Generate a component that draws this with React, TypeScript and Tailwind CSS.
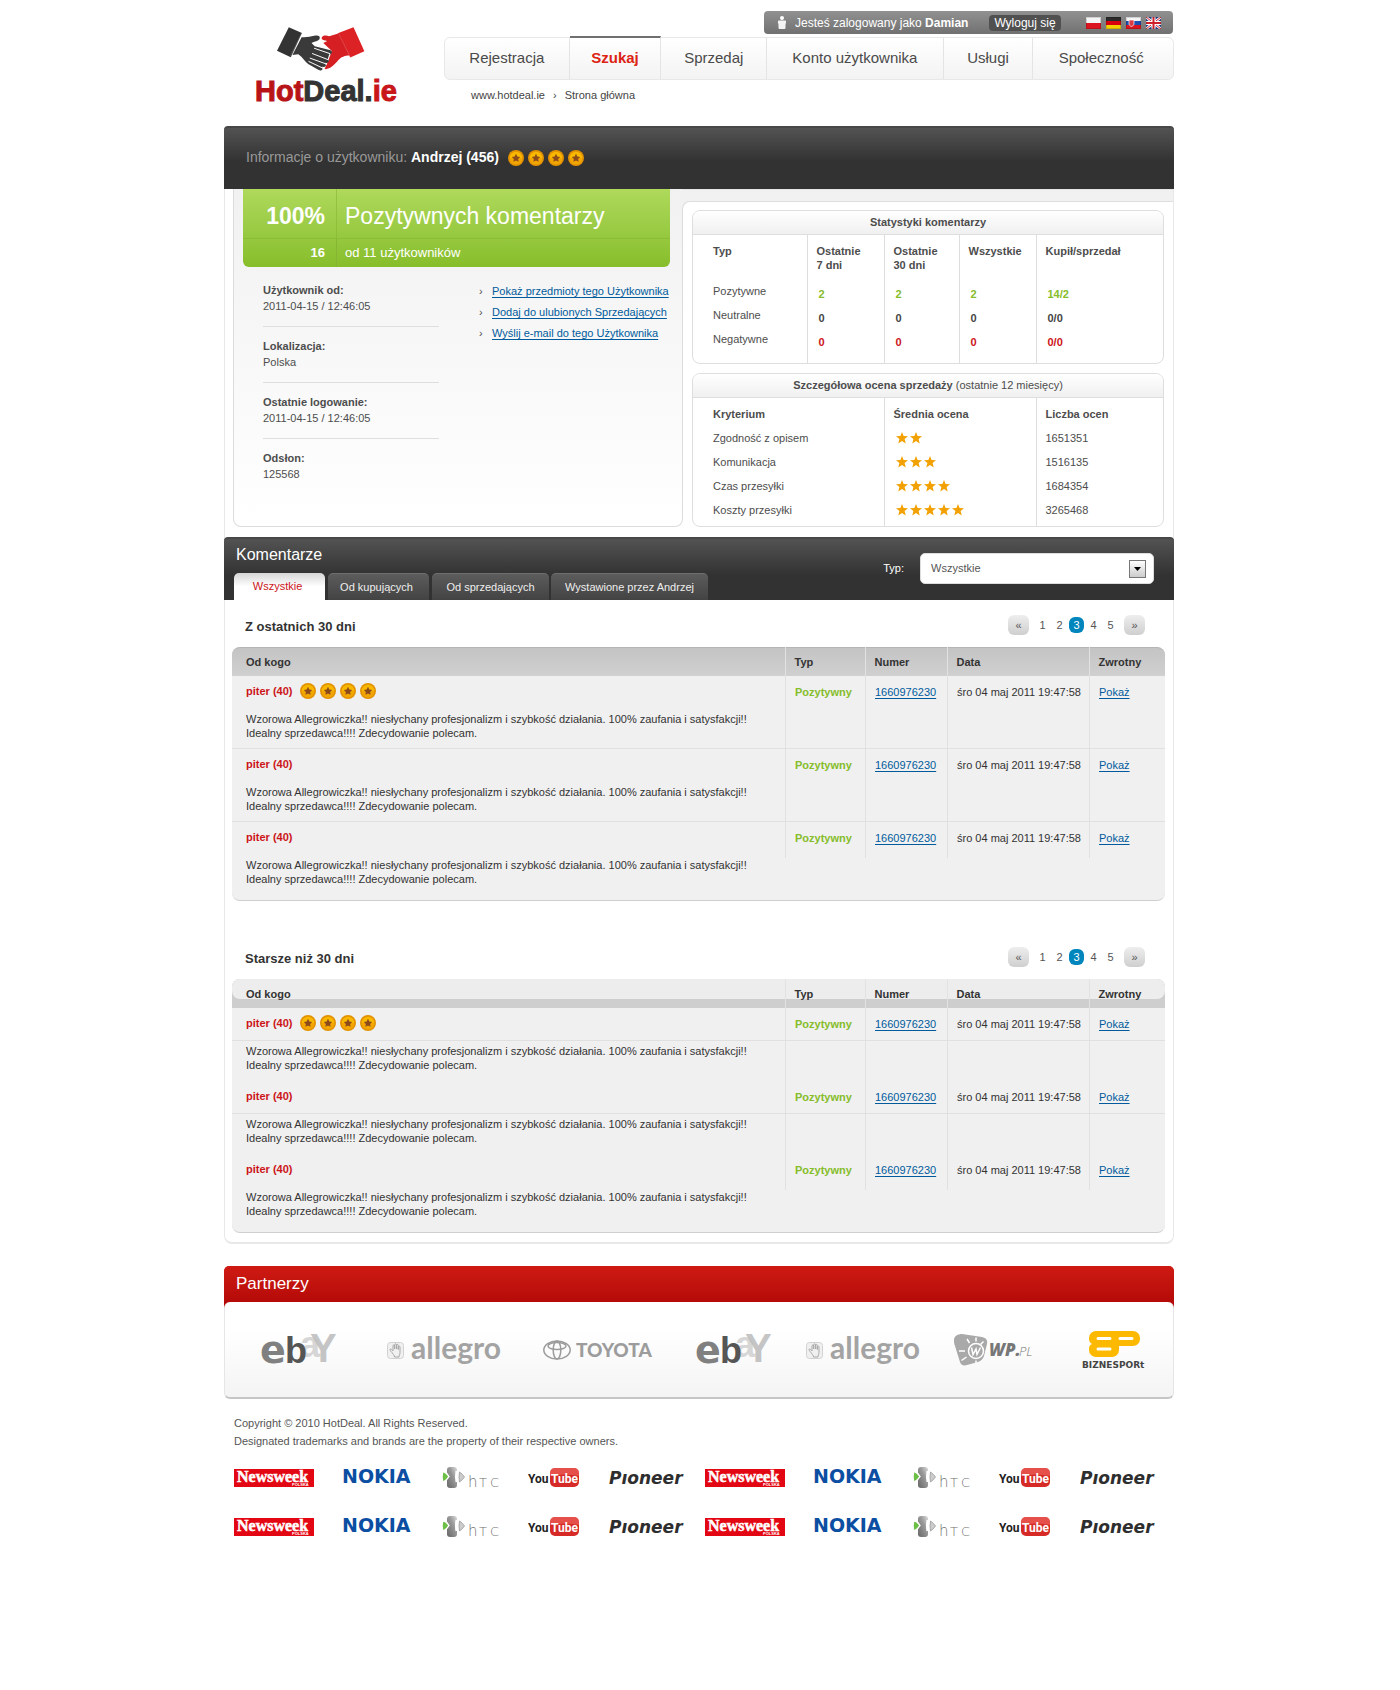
const NAV = ["Rejestracja", "Szukaj", "Sprzedaj", "Konto użytkownika", "Usługi", "Społeczność"];

function Handshake() {
  return (
    <svg viewBox="164 76 274 140" className="mr-[10px] h-[46px] w-[90px]" aria-hidden="true">
      <path d="M400 80 L433 153 L390 172 L352 98 Z" fill="#dd2226" />
      <path
        d="M303 112 C306 104 316 104 326 107 L356 98 L388 166 C374 166 362 170 352 182 C342 194 326 210 312 207 L322 184 L334 152 L308 128 L320 122 C312 120 302 119 303 112 Z"
        fill="#d61f23"
      />
      <path d="M203 80 L243 97 L209 171 L167 151 Z" fill="#333" />
      <path
        d="M242 110 C256 112 268 108 280 106 C292 103 299 106 297 114 C295 122 280 123 272 128 L282 138 L330 150 C338 154 334 164 326 162 L322 176 C330 182 322 192 314 188 L316 198 C312 202 306 200 304 200 C310 208 302 214 294 210 L262 192 C252 184 246 172 232 162 L214 164 Z"
        fill="#3a3a3a"
      />
      <path
        d="M281 144 L328 160 M275 160 L324 179 M268 174 L318 192 M264 184 L306 204"
        stroke="#fff"
        strokeWidth="3"
        strokeLinecap="round"
        fill="none"
      />
      <path d="M354 98 L390 170 M242 98 L208 168" stroke="#fff" strokeOpacity=".25" strokeWidth="2" />
    </svg>
  );
}

function Flags() {
  return (
    <div className="flex gap-[5px]">
      <a href="#pl" aria-label="Polski">
        <svg width="15" height="12" viewBox="0 0 15 12">
          <path d="M0 0h15v6H0z" fill="#f4f4f4" />
          <path d="M0 6h15v6H0z" fill="#dc1420" />
          <path d="M.5 .5h14v11H.5z" fill="none" stroke="#000" strokeOpacity=".15" />
        </svg>
      </a>
      <a href="#de" aria-label="Deutsch">
        <svg width="15" height="12" viewBox="0 0 15 12">
          <path d="M0 0h15v4H0z" fill="#2a2a2a" />
          <path d="M0 4h15v4H0z" fill="#d8000f" />
          <path d="M0 8h15v4H0z" fill="#f5cf00" />
          <path d="M.5 .5h14v11H.5z" fill="none" stroke="#000" strokeOpacity=".15" />
        </svg>
      </a>
      <a href="#sk" aria-label="Slovenčina">
        <svg width="15" height="12" viewBox="0 0 15 12">
          <path d="M0 0h15v4H0z" fill="#f4f4f4" />
          <path d="M0 4h15v4H0z" fill="#1c4fb0" />
          <path d="M0 8h15v4H0z" fill="#dc1420" />
          <path d="M3 3h5v4c0 1-1 2-2.500 2.500C4 9 3 8 3 7z" fill="#dc3a45" stroke="#fff" strokeWidth=".7" />
          <path d="M.5 .5h14v11H.5z" fill="none" stroke="#000" strokeOpacity=".15" />
        </svg>
      </a>
      <a href="#en" aria-label="English">
        <svg width="15" height="12" viewBox="0 0 15 12">
          <path d="M0 0h15v12H0z" fill="#27408f" />
          <path d="M0 0l15 12M15 0L0 12" stroke="#fff" strokeWidth="2.600" />
          <path d="M0 0l15 12M15 0L0 12" stroke="#d0202c" strokeWidth="1" />
          <path d="M7.500 0v12M0 6h15" stroke="#fff" strokeWidth="4" />
          <path d="M7.500 0v12M0 6h15" stroke="#d0202c" strokeWidth="2" />
          <path d="M.5 .5h14v11H.5z" fill="none" stroke="#000" strokeOpacity=".15" />
        </svg>
      </a>
    </div>
  );
}

const STAR = "M8 3.800l1.300 2.700 2.900.4-2.100 2 .5 2.900L8 10.400l-2.600 1.400.5-2.900-2.100-2 2.900-.4z";

function Coins() {
  return (
    <span className="flex gap-1" role="img" aria-label="4 gwiazdki">
      {[0, 1, 2, 3].map((i) => (
        <svg key={i} width="16" height="16" viewBox="0 0 16 16">
          <circle cx="8" cy="8" r="8" fill="#e39200" />
          <circle cx="8" cy="8" r="6.200" fill="#f9b800" />
          <path d="M1.800 8a6.200 6.200 0 0 0 12.400 0z" fill="#f2a500" />
          <path d={STAR} fill="#8a4a1c" />
        </svg>
      ))}
    </span>
  );
}

function Stars({ count }: { count: number }) {
  return (
    <span className="flex h-6 items-center gap-[2px]" role="img" aria-label={`${count} z 5`}>
      {Array.from({ length: count }, (_, i) => (
        <svg key={i} width="12" height="12" viewBox="0 0 12 12">
          <path d="M6 0l1.600 4.100 4.400.2-3.400 2.800 1.100 4.400L6 9.100l-3.700 2.400 1.100-4.400L0 4.300l4.400-.2z" fill="#f2a104" />
        </svg>
      ))}
    </span>
  );
}

function Header() {
  return (
    <header className="flex h-[126px] justify-between">
      <a href="#home" className="ml-[31px] mt-[26px] flex flex-col items-center self-start" aria-label="HotDeal.ie">
        <Handshake />
        <span className="mt-[3px] text-[29px] leading-8 font-bold text-[#333] [-webkit-text-stroke:1px]">
          <span className="text-[#b81418]">Hot</span>Deal.<span className="text-[#c8161b]">ie</span>
        </span>
      </a>
      <div className="flex w-[730px] flex-col pt-[11px]">
        <div className="mr-px flex h-[23px] w-[409px] items-center self-end rounded-[4px] bg-linear-to-b from-[#919191] to-[#717171] pr-[12px] pl-[13px] text-[12px] text-white">
          <svg width="10" height="13" viewBox="0 0 10 13" className="mr-2" aria-hidden="true">
            <circle cx="5" cy="2" r="2" fill="#fff" />
            <path d="M1.500 4.500h7C9.500 5 9 7 8.500 8.500V12q0 1-1 1h-5q-1 0-1-1V8.500C1 7 .5 5 1.500 4.500z" fill="#f4f4f4" />
          </svg>
          <span>
            Jesteś zalogowany jako <b>Damian</b>
          </span>
          <button type="button" className="ml-auto h-4 w-[72px] rounded-[4px] bg-[#505050] text-[12px] leading-4">
            Wyloguj się
          </button>
          <span className="ml-[25px]">
            <Flags />
          </span>
        </div>
        <nav className="mt-[3px] grid h-[43px] grid-cols-[125fr_92fr_106fr_177fr_90fr_140fr] rounded-[6px] border border-[#e8e8e8] bg-linear-to-b from-white to-[#f3f3f3] text-[15px] text-[#4a4a4a]">
          {NAV.map((item, i) => (
            <a
              key={item}
              href={`#${item}`}
              className={
                i === 1
                  ? "-mt-[2px] flex items-center justify-center border-t-2 border-r border-t-[#707070] border-r-[#e4e4e4] font-bold text-[#dc2314]"
                  : i === 5
                    ? "flex items-center justify-center pr-1"
                    : "flex items-center justify-center border-r border-[#e4e4e4]"
              }
            >
              {item}
            </a>
          ))}
        </nav>
        <p className="mt-2 ml-[27px] leading-[14px] text-[#444]">
          <a href="#hotdeal">www.hotdeal.ie</a>
          <span className="mx-2">›</span>
          <a href="#start">Strona główna</a>
        </p>
      </div>
    </header>
  );
}

const INFO = [
  ["Użytkownik od:", "2011-04-15 / 12:46:05"],
  ["Lokalizacja:", "Polska"],
  ["Ostatnie logowanie:", "2011-04-15 / 12:46:05"],
  ["Odsłon:", "125568"],
];

const USER_LINKS = [
  "Pokaż przedmioty tego Użytkownika",
  "Dodaj do ulubionych Sprzedających",
  "Wyślij e-mail do tego Użytkownika",
];

function UserCard() {
  return (
    <div className="rounded-b-[8px] border border-t-0 border-[#dcdcdc] bg-linear-to-b from-[#f1f1f1] to-white pl-[9px] text-[#4d4d4d]">
      <div className="mr-3 grid grid-cols-[94px_1fr] rounded-b-[6px] bg-linear-to-b from-[#aed95b] to-[#87be2a] text-white">
        <b className="flex h-[50px] items-center justify-end border-r border-b border-[#86b534]/60 pt-[6px] pr-[11px] text-[23px]">100%</b>
        <span className="flex h-[50px] items-center border-b border-[#86b534]/60 pt-[6px] pl-2 text-[23px]">
          Pozytywnych komentarzy
        </span>
        <b className="flex h-7 items-center justify-end border-r border-[#86b534] pr-[11px] text-[13px]">16</b>
        <span className="flex h-7 items-center pl-2 text-[13px]">od 11 użytkowników</span>
      </div>
      <div className="flex justify-between pt-1 pl-5">
        <dl className="w-[176px] leading-4">
          {INFO.map(([label, value]) => (
            <div key={label} className="border-b border-[#dedede] pt-[11px] pb-3 last:border-b-0">
              <dt className="font-bold">{label}</dt>
              <dd>{value}</dd>
            </div>
          ))}
        </dl>
        <ul className="w-[203px] pt-[10px] leading-[21px]">
          {USER_LINKS.map((link) => (
            <li key={link} className="flex">
              <span className="w-[13px]">›</span>
              <a href="#user" className="whitespace-nowrap text-[#005b9c] underline underline-offset-2">
                {link}
              </a>
            </li>
          ))}
        </ul>
      </div>
    </div>
  );
}

const CAPTION =
  "flex h-6 items-center justify-center rounded-t-[7px] border-b border-[#dedede] bg-linear-to-b from-white to-[#f0f0f0] text-[11px] text-[#4d4d4d]";
const STAT_ROWS = [
  { label: "Pozytywne", values: ["2", "2", "2", "14/2"], color: "text-[#86bd2a]" },
  { label: "Neutralne", values: ["0", "0", "0", "0/0"], color: "text-[#444]" },
  { label: "Negatywne", values: ["0", "0", "0", "0/0"], color: "text-[#cc1419]" },
];
const RATINGS: [string, number, string][] = [
  ["Zgodność z opisem", 2, "1651351"],
  ["Komunikacja", 3, "1516135"],
  ["Czas przesyłki", 4, "1684354"],
  ["Koszty przesyłki", 5, "3265468"],
];

function Stats() {
  return (
    <div className="relative -ml-px">
      <div className="h-3 border-t border-[#e6e6e6] bg-[#f1f1f1]" />
      <div className="h-2 bg-[#f1f1f1]">
        <div className="h-2 rounded-tl-[8px] border-t border-l border-[#dedede] bg-white" />
      </div>
      <div className="mt-px mr-[9px] ml-[10px] flex flex-col gap-[9px] text-[#4d4d4d]">
        <section className="rounded-[8px] border border-[#dedede]">
          <h2 className={CAPTION}>
            <b>Statystyki komentarzy</b>
          </h2>
          <table className="w-full table-fixed text-left">
            <colgroup>
              <col className="w-[114px]" />
              <col className="w-[77px]" />
              <col className="w-[75px]" />
              <col className="w-[77px]" />
              <col />
            </colgroup>
            <thead className="leading-[14px]">
              <tr className="h-11 align-top">
                <th className="pt-[9px] pl-5">Typ</th>
                <th className="border-l border-[#dedede] pt-[9px] pl-[9px]">
                  Ostatnie
                  <br />7 dni
                </th>
                <th className="border-l border-[#dedede] pt-[9px] pl-[9px]">
                  Ostatnie
                  <br />
                  30 dni
                </th>
                <th className="border-l border-[#dedede] pt-[9px] pl-[9px]">Wszystkie</th>
                <th className="border-l border-[#dedede] pt-[9px] pl-[9px]">Kupił/sprzedał</th>
              </tr>
            </thead>
            <tbody>
              {STAT_ROWS.map((row) => (
                <tr key={row.label} className="h-6 align-top last:h-9">
                  <td className="pl-5 leading-6">{row.label}</td>
                  {row.values.map((value, i) => (
                    <td key={i} className="border-l border-[#dedede] pt-[6px] pl-[11px]">
                      <b className={`block leading-[18px] ${row.color}`}>{value}</b>
                    </td>
                  ))}
                </tr>
              ))}
            </tbody>
          </table>
        </section>
        <section className="rounded-[8px] border border-[#dedede]">
          <h2 className={CAPTION}>
            <span>
              <b>Szczegółowa ocena sprzedaży</b> (ostatnie 12 miesięcy)
            </span>
          </h2>
          <table className="w-full table-fixed text-left">
            <colgroup>
              <col className="w-[191px]" />
              <col className="w-[152px]" />
              <col />
            </colgroup>
            <thead className="leading-[14px]">
              <tr className="h-7 align-top">
                <th className="pt-[9px] pl-5">Kryterium</th>
                <th className="border-l border-[#dedede] pt-[9px] pl-[9px]">Średnia ocena</th>
                <th className="border-l border-[#dedede] pt-[9px] pl-[9px]">Liczba ocen</th>
              </tr>
            </thead>
            <tbody className="leading-6">
              {RATINGS.map(([label, count, total]) => (
                <tr key={label} className="h-6 align-top last:h-7">
                  <td className="pl-5">{label}</td>
                  <td className="border-l border-[#dedede] pl-[11px]">
                    <Stars count={count} />
                  </td>
                  <td className="border-l border-[#dedede] pl-[9px]">{total}</td>
                </tr>
              ))}
            </tbody>
          </table>
        </section>
      </div>
    </div>
  );
}

const TAB = "h-[27px] rounded-t-[5px] border-t border-[#6e6e6e] bg-linear-to-b from-[#5c5c5c] to-[#434343] text-center text-[#eee]";

function CommentsHeader() {
  return (
    <div className="-mx-px flex h-[63px] justify-between rounded-t-[4px] border-t-2 border-[#474747] bg-linear-to-b from-[#535353] to-[#323232] to-60% pr-5 pl-[10px]">
      <div className="flex flex-col justify-between">
        <h2 className="pt-[6px] pl-[2px] text-[16px] leading-5 text-white">Komentarze</h2>
        <div className="flex" role="tablist">
          <button
            type="button"
            role="tab"
            aria-selected="true"
            className="mr-[3px] h-[27px] w-[91px] rounded-t-[5px] bg-linear-to-b from-[#d6d6d6] to-white to-50% pr-1 text-[#cc1419]"
          >
            Wszystkie
          </button>
          <button type="button" role="tab" aria-selected="false" className={`${TAB} mr-[3px] w-[101px] pr-1`}>
            Od kupujących
          </button>
          <button type="button" role="tab" aria-selected="false" className={`${TAB} mr-[2px] w-[117px]`}>
            Od sprzedających
          </button>
          <button type="button" role="tab" aria-selected="false" className={`${TAB} w-[157px]`}>
            Wystawione przez Andrzej
          </button>
        </div>
      </div>
      <div className="mt-[14px] flex h-[31px] items-center">
        <label htmlFor="typ" className="mr-[16px] text-white">
          Typ:
        </label>
        <div className="relative">
          <select
            id="typ"
            className="block h-[31px] w-[234px] appearance-none rounded-[5px] border border-[#ddd] bg-white pl-[10px] text-[11px] text-[#555]"
          >
            <option>Wszystkie</option>
            <option>Pozytywne</option>
            <option>Neutralne</option>
            <option>Negatywne</option>
          </select>
          <span className="pointer-events-none absolute top-[7px] right-2 flex h-[18px] w-[17px] items-center justify-center border border-[#777] bg-linear-to-b from-white to-[#ccc]">
            <svg width="7" height="4" viewBox="0 0 7 4">
              <path d="M0 0h7L3.500 4z" fill="#000" />
            </svg>
          </span>
        </div>
      </div>
    </div>
  );
}

const ARROW = "h-5 w-[21px] rounded-[6px] bg-linear-to-b from-[#eee] to-[#cfcfcf] text-[11px] leading-[18px]";

function Pagination() {
  return (
    <nav className="flex items-center text-[#555]" aria-label="Strony">
      <button type="button" className={`${ARROW} mr-[5px]`} aria-label="Poprzednia">
        «
      </button>
      {["1", "2", "3", "4", "5"].map((n) => (
        <a
          key={n}
          href={`#strona-${n}`}
          className={
            n === "3"
              ? "mx-[1px] h-4 w-[15px] rounded-[6px] bg-[#0085bd] text-center leading-4 text-white"
              : "w-[17px] text-center leading-4"
          }
        >
          {n}
        </a>
      ))}
      <button type="button" className={`${ARROW} ml-[5px]`} aria-label="Następna">
        »
      </button>
    </nav>
  );
}

const LINE_LOW = "bg-[linear-gradient(to_bottom,transparent_72px,#e0e0e0_72px)]";
const LINE_HIGH =
  "bg-[linear-gradient(to_bottom,transparent_32px,#e0e0e0_32px,#e0e0e0_33px,transparent_33px)]";
const HEAD_CELL = "border-l border-[#e2e2e2] pt-[2px] pl-[9px]";

function Comments({ title, older }: { title: string; older?: boolean }) {
  const line = older ? LINE_HIGH : LINE_LOW;
  return (
    <section className="pr-2 pl-[7px]">
      <div className="mb-3 flex h-5 items-center justify-between pr-5 pl-[13px]">
        <h3 className="pt-1 text-[13px] font-bold text-[#333]">{title}</h3>
        <Pagination />
      </div>
      <div className="relative rounded-[8px] border-b border-[#cfcfcf] bg-[#f0f0f0] text-[#333]">
        <div
          className={
            older
              ? "absolute inset-x-0 top-0 h-[29px] rounded-t-[8px] bg-[#cecece]"
              : "absolute inset-x-0 top-0 h-[29px] rounded-t-[8px] border-t border-[#b5b5b5] bg-linear-to-b from-[#c4c4c4] to-[#d0d0d0]"
          }
        >
          {older && <div className="h-5 rounded-[8px] bg-[#ededed]" />}
        </div>
        <table className="relative w-full table-fixed text-left">
          <colgroup>
            <col />
            <col className="w-[80px]" />
            <col className="w-[82px]" />
            <col className="w-[142px]" />
            <col className="w-[76px]" />
          </colgroup>
          <thead>
            <tr className="h-[29px]">
              <th className="pt-[2px] pl-[14px]">Od kogo</th>
              <th className={HEAD_CELL}>Typ</th>
              <th className={HEAD_CELL}>Numer</th>
              <th className={HEAD_CELL}>Data</th>
              <th className={HEAD_CELL}>Zwrotny</th>
            </tr>
          </thead>
          <tbody>
            {[0, 1, 2].map((i) => {
              const last = i === 2;
              const cell = last
                ? "h-9 border-l border-[#e0e0e0] pt-[9px] pl-[9px] leading-[14px]"
                : "h-[73px] border-l border-[#e0e0e0] pt-[9px] pl-[9px] leading-[14px]";
              return (
                <tr key={i} className={last ? "h-[78px] align-top" : `h-[73px] align-top ${line}`}>
                  <td className="p-0 pl-[14px]">
                    <div className="flex items-center gap-2 pt-[7px] leading-4">
                      <a href="#piter" className="font-bold text-[#cc1419]">
                        piter (40)
                      </a>
                      {i === 0 && <Coins />}
                    </div>
                    <p className="pt-[13px] leading-[14px]">
                      Wzorowa Allegrowiczka!! niesłychany profesjonalizm i szybkość działania. 100% zaufania i satysfakcji!!
                      <br />
                      Idealny sprzedawca!!!! Zdecydowanie polecam.
                    </p>
                  </td>
                  <td className="p-0">
                    <div className={cell}>
                      <b className="text-[#86bd2a]">Pozytywny</b>
                    </div>
                  </td>
                  <td className="p-0">
                    <div className={cell}>
                      <a href="#numer" className="text-[#005b9c] underline underline-offset-2">
                        1660976230
                      </a>
                    </div>
                  </td>
                  <td className="p-0">
                    <div className={`${cell} whitespace-nowrap`}>śro 04 maj 2011 19:47:58</div>
                  </td>
                  <td className="p-0">
                    <div className={cell}>
                      <a href="#pokaz" className="text-[#005b9c] underline underline-offset-2">
                        Pokaż
                      </a>
                    </div>
                  </td>
                </tr>
              );
            })}
          </tbody>
        </table>
      </div>
    </section>
  );
}

function Ebay() {
  return (
    <svg width="77" height="34" viewBox="0 0 77 34" className="overflow-visible" fontFamily="'Liberation Sans', Arial, sans-serif" fontWeight="bold" role="img" aria-label="ebay">
      <text x="38" y="24" fontSize="36" fill="#d6d6d6">a</text>
      <text x="-2" y="30" fontSize="38" fontFamily="'DejaVu Sans', sans-serif" fill="#808080">e</text>
      <text x="23" y="30" fontSize="36" fill="#555">b</text>
      <text x="48" y="29" fontSize="40" fill="#bdbdbd" fillOpacity=".9">Y</text>
    </svg>
  );
}

function Allegro() {
  return (
    <svg width="116" height="40" viewBox="0 0 116 40" className="overflow-visible" role="img" aria-label="allegro">
      <rect x=".5" y="12.500" width="16" height="16" rx="3" fill="#f0f0f0" stroke="#d2d2d2" />
      <path
        d="M5 22.500c-2-2-2.500-3.500-1.500-3.500s1.500 1 2.500 2v-5c0-1.500 1.600-1.500 1.700 0v3-4c0-1.500 1.800-1.500 1.900 0v4-3.500c0-1.400 1.700-1.400 1.700 0v4-2.500c0-1.200 1.700-1.200 1.700 0v5.500c0 2-1 2.500-1 4.500H7.500c0-2-1.500-2.500-2.500-4.500z"
        fill="none"
        stroke="#a8a8a8"
      />
      <text x="24" y="29" fontFamily="Lato, sans-serif" fontWeight="bold" fontSize="30" fill="#a3a3a3">
        allegro
      </text>
    </svg>
  );
}

function Toyota() {
  return (
    <svg width="114" height="20" viewBox="0 0 114 20" className="overflow-visible" role="img" aria-label="Toyota">
      <g fill="none" stroke="#9c9c9c" strokeWidth="1.500">
        <ellipse cx="14" cy="10" rx="13.200" ry="9" />
        <ellipse cx="14" cy="10" rx="3.800" ry="9" />
        <ellipse cx="14" cy="6" rx="9" ry="3.600" />
      </g>
      <text x="33" y="17" fontFamily="Lato, sans-serif" fontWeight="900" fontSize="19" fill="#9c9c9c">
        TOYOTA
      </text>
    </svg>
  );
}

function Wp() {
  return (
    <svg width="80" height="32" viewBox="0 0 80 32" className="overflow-visible" role="img" aria-label="WP.PL">
      <path d="M0 6C0 2 4 0 8 0l20 3c4 1 6 3 5 7l-3 12c-1 3-3 5-6 6l-11 3c-4 1-6 0-7-3L1 12C0 10 0 8 0 6z" fill="#a9a9a9" />
      <circle cx="22" cy="17" r="7.500" fill="none" stroke="#fff" strokeWidth="1.500" />
      <path d="M13 5l2.500 4M22 3.500v4M29.500 7.500l-3 3M5 17h6M7.500 26.500l5-3.500M22 26.500v2.500" stroke="#fff" strokeWidth="1.500" />
      <path d="M17.500 13.500l1.500 7 3-5.500 1 5.500 3.500-7" fill="none" stroke="#fff" strokeWidth="1.500" />
      <g fontFamily="'Open Sans', sans-serif" fontStyle="italic" fill="#777">
        <text x="35" y="22" fontWeight="800" fontSize="17">WP.</text>
        <text x="65" y="22" fontWeight="300" fontSize="13">PL</text>
      </g>
    </svg>
  );
}

function Biznesport() {
  return (
    <svg width="66" height="38" viewBox="0 0 66 38" className="overflow-visible" role="img" aria-label="Biznesport">
      <path
        d="M14 0h37a7 7 0 0 1 7 7v1a7 7 0 0 1-7 7H37v4a7 7 0 0 1-7 7H14a7 7 0 0 1-7-7v-1c0-3 1-4 3-5-2-1-3-3-3-5V7a7 7 0 0 1 7-7z"
        fill="#fdb900"
      />
      <path d="M16 7.500h12M38 7.500h12M16 18h12" stroke="#fff" strokeWidth="3" strokeLinecap="round" />
      <text x="0" y="37" fontFamily="'DejaVu Sans', sans-serif" fontWeight="bold" fontSize="9" fill="#444">
        BIZNESPORt
      </text>
    </svg>
  );
}

function Partners() {
  return (
    <section className="mt-[22px] rounded-[6px] bg-[#b50a08]">
      <h2 className="flex h-9 items-center rounded-t-[5px] bg-linear-to-b from-[#cf1a13] to-[#b50a08] pl-3 text-[17px] text-white">
        Partnerzy
      </h2>
      <div className="bg-[linear-gradient(to_bottom,#b50a08_8px,#fff_8px)]">
        <div className="flex h-[97px] items-center rounded-[6px] border-x border-b-2 border-x-[#e6e6e6] border-b-[#c6c6c6] bg-linear-to-b from-white from-30% to-[#f4f4f4] pl-[37px]">
          <Ebay />
          <span className="ml-12">
            <Allegro />
          </span>
          <span className="ml-10">
            <Toyota />
          </span>
          <span className="ml-10">
            <Ebay />
          </span>
          <span className="ml-8">
            <Allegro />
          </span>
          <span className="ml-8">
            <Wp />
          </span>
          <span className="ml-12">
            <Biznesport />
          </span>
        </div>
      </div>
    </section>
  );
}

function Brands({ id }: { id: string }) {
  return (
    <div className="flex items-center justify-between">
      <svg width="80" height="18" viewBox="0 0 80 18" className="overflow-visible" role="img" aria-label="Newsweek Polska">
        <path d="M0 0h80v18H0z" fill="#e30613" />
        <text x="3" y="13" fontFamily="'Liberation Serif', serif" fontWeight="bold" fontSize="16" fill="#fff" stroke="#fff" strokeWidth=".5">
          Newsweek
        </text>
        <text x="58" y="17" fontFamily="'Liberation Sans', sans-serif" fontWeight="bold" fontSize="4" fill="#fff">
          POLSKA
        </text>
      </svg>
      <svg width="70" height="20" viewBox="0 0 70 20" className="overflow-visible" role="img" aria-label="Nokia">
        <text x="-1" y="15" fontFamily="'DejaVu Sans', sans-serif" fontWeight="bold" fontSize="19" fill="#0b4ea2">
          NOKIA
        </text>
      </svg>
      <svg width="60" height="22" viewBox="0 0 60 22" className="overflow-visible" role="img" aria-label="HTC">
        <defs>
          <linearGradient id={id} x1="0" x2="1" y1="1" y2="0">
            <stop offset="0" stopColor="#666" />
            <stop offset=".6" stopColor="#999" />
            <stop offset="1" stopColor="#ddd" />
          </linearGradient>
        </defs>
        <rect x="5" y="0" width="10" height="21" rx="3" fill={`url(#${id})`} />
        <path d="M1 4q4 2 6 5.500Q5 13 1 15.500-1 10 1 4z" fill="#6cbf45" stroke="#fff" strokeWidth="1.500" />
        <path d="M14.500 4q-1 6 0 11" stroke="#fff" strokeWidth="2" fill="none" />
        <path d="M17.500 5q3 2 5 5-2 3-5 5-1-5 0-10z" fill="#ccc" stroke="#999" strokeWidth=".8" />
        <g fontFamily="'DejaVu Sans', sans-serif" fontWeight="200" fill="#707070">
          <text x="26" y="20" fontSize="15">h</text>
          <text x="37" y="20" fontSize="13">T</text>
          <text x="48" y="20" fontSize="13">C</text>
        </g>
      </svg>
      <svg width="50" height="20" viewBox="0 0 50 20" className="overflow-visible" fontFamily="Roboto, sans-serif" fontWeight="bold" role="img" aria-label="YouTube">
        <rect x="20" y="0" width="29" height="19" rx="5" fill="#d62a26" />
        <path d="M20 8V5q0-5 5-5h19q5 0 5 5v3q-14-3-29 0z" fill="#ee6a62" fillOpacity=".6" />
        <text x="-2" y="15" fontSize="12" fill="#222">You</text>
        <text x="21" y="15" fontSize="12" fill="#fff">Tube</text>
      </svg>
      <svg width="75" height="18" viewBox="0 0 75 18" className="overflow-visible" role="img" aria-label="Pioneer">
        <text x="0" y="15" fontFamily="'DejaVu Sans', sans-serif" fontWeight="bold" fontStyle="italic" fontSize="17" fill="#2e2e2e">
          Pıoneer
        </text>
      </svg>
    </div>
  );
}

function Footer() {
  return (
    <footer className="px-[10px] pt-[15px] text-[#555]">
      <p className="leading-[18px]">
        Copyright © 2010 HotDeal. All Rights Reserved.
        <br />
        Designated trademarks and brands are the property of their respective owners.
      </p>
      <div className="mt-[17px] flex flex-col gap-[27px] pr-[9px]">
        {[0, 1].map((row) => (
          <div key={row} className="grid h-[22px] grid-cols-2 gap-[21px]">
            <Brands id={`htc-${row}-left`} />
            <Brands id={`htc-${row}-right`} />
          </div>
        ))}
      </div>
    </footer>
  );
}

export default function App() {
  return (
    <div className="bg-white pr-[2px] pb-32 font-['Liberation_Sans',Arial,sans-serif] text-[11px]">
      <div className="mx-auto max-w-[950px]">
        <Header />
        <main>
          <div className="flex h-[63px] items-center rounded-t-[4px] border-t-2 border-[#474747] bg-linear-to-b from-[#535353] to-[#323232] to-55% pb-[2px] pl-[22px] text-[14px]">
            <h1 className="text-[#999]">
              Informacje o użytkowniku: <b className="text-white">Andrzej (456)</b>
            </h1>
            <span className="ml-[9px]">
              <Coins />
            </span>
          </div>
          <div className="rounded-b-[8px] border-x border-b-2 border-[#e8e8e8] pb-[9px]">
            <div className="grid grid-cols-[450fr_490fr] pb-[10px] pl-2">
              <UserCard />
              <Stats />
            </div>
            <CommentsHeader />
            <div className="flex flex-col gap-[46px] pt-[15px]">
              <Comments title="Z ostatnich 30 dni" />
              <Comments title="Starsze niż 30 dni" older />
            </div>
          </div>
          <Partners />
        </main>
        <Footer />
      </div>
    </div>
  );
}
